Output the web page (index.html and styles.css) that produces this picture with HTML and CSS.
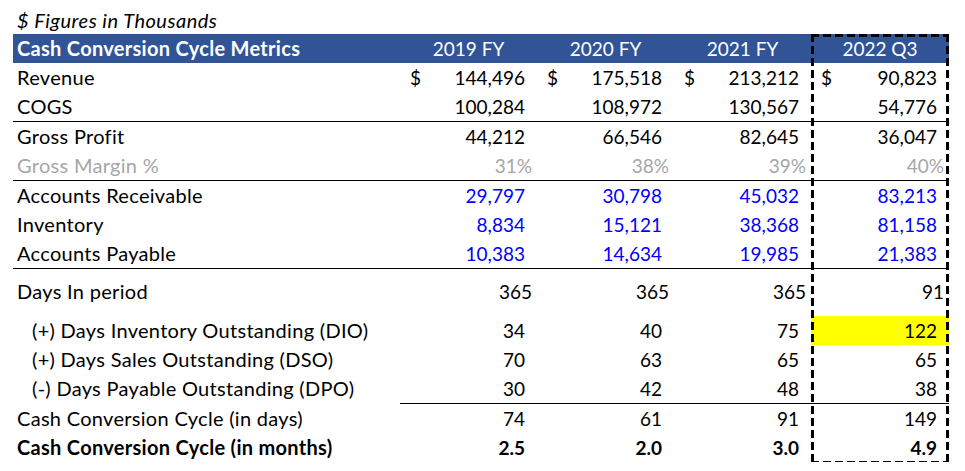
FILE: index.html
```html
<!DOCTYPE html>
<html>
<head>
<meta charset="utf-8">
<link rel="stylesheet" href="styles.css">
</head>
<body>
<div class="sheet">
  <div class="caption">$ Figures in Thousands</div>
  <div class="table-wrap">
    <table class="ccc">
      <colgroup>
        <col class="c-label"><col class="c-num"><col class="c-num"><col class="c-num"><col class="c-last">
      </colgroup>
      <thead>
        <tr class="hdr">
          <th class="lbl">Cash Conversion Cycle Metrics</th>
          <th>2019 FY</th><th>2020 FY</th><th>2021 FY</th><th>2022 Q3</th>
        </tr>
      </thead>
      <tbody>
        <tr>
          <td class="lbl">Revenue</td>
          <td><div class="acc"><span>$</span><span>144,496</span></div></td>
          <td><div class="acc"><span>$</span><span>175,518</span></div></td>
          <td><div class="acc"><span>$</span><span>213,212</span></div></td>
          <td><div class="acc"><span>$</span><span>90,823</span></div></td>
        </tr>
        <tr>
          <td class="lbl">COGS</td>
          <td class="n">100,284</td><td class="n">108,972</td><td class="n">130,567</td><td class="n">54,776</td>
        </tr>
        <tr class="rule">
          <td class="lbl">Gross Profit</td>
          <td class="n">44,212</td><td class="n">66,546</td><td class="n">82,645</td><td class="n">36,047</td>
        </tr>
        <tr class="muted">
          <td class="lbl">Gross Margin %</td>
          <td class="p">31%</td><td class="p">38%</td><td class="p">39%</td><td class="p">40%</td>
        </tr>
        <tr class="rule input">
          <td class="lbl">Accounts Receivable</td>
          <td class="n">29,797</td><td class="n">30,798</td><td class="n">45,032</td><td class="n">83,213</td>
        </tr>
        <tr class="input">
          <td class="lbl">Inventory</td>
          <td class="n">8,834</td><td class="n">15,121</td><td class="n">38,368</td><td class="n">81,158</td>
        </tr>
        <tr class="input">
          <td class="lbl">Accounts Payable</td>
          <td class="n">10,383</td><td class="n">14,634</td><td class="n">19,985</td><td class="n">21,383</td>
        </tr>
        <tr class="rule tall">
          <td class="lbl">Days In period</td>
          <td class="p">365</td><td class="p">365</td><td class="p">365</td><td class="p">91</td>
        </tr>
        <tr>
          <td class="lbl sub">(+) Days Inventory Outstanding (DIO)</td>
          <td class="n">34</td><td class="n">40</td><td class="n">75</td><td class="n hl">122</td>
        </tr>
        <tr>
          <td class="lbl sub">(+) Days Sales Outstanding (DSO)</td>
          <td class="n">70</td><td class="n">63</td><td class="n">65</td><td class="n">65</td>
        </tr>
        <tr>
          <td class="lbl sub">(-) Days Payable Outstanding (DPO)</td>
          <td class="n">30</td><td class="n">42</td><td class="n">48</td><td class="n">38</td>
        </tr>
        <tr class="sum">
          <td class="lbl">Cash Conversion Cycle (in days)</td>
          <td class="n">74</td><td class="n">61</td><td class="n">91</td><td class="n">149</td>
        </tr>
        <tr class="bold">
          <td class="lbl">Cash Conversion Cycle (in months)</td>
          <td class="n">2.5</td><td class="n">2.0</td><td class="n">3.0</td><td class="n">4.9</td>
        </tr>
      </tbody>
    </table>
    <div class="q3-frame"></div>
  </div>
</div>
</body>
</html>
```

FILE: styles.css
```css
html, body {
  margin: 0;
  padding: 0;
  background: #fff;
}
body {
  font-family: Lato, "Liberation Sans", sans-serif;
  font-size: 19px;
  color: #000;
}
.sheet {
  padding: 6px 0 0 13px;
}
.caption {
  font-style: italic;
  font-size: 20px;
  letter-spacing: 0.5px;
  height: 28px;
  line-height: 28px;
  padding-left: 4px;
}
.table-wrap {
  position: relative;
  width: 936px;
}
.ccc {
  border-collapse: collapse;
  table-layout: fixed;
  width: 936px;
}
.c-label { width: 387px; }
.c-num { width: 137px; }
.c-last { width: 138px; }
.ccc th, .ccc td {
  height: 29px;
  padding: 0;
  white-space: nowrap;
  vertical-align: middle;
  line-height: 29px;
}
.hdr th {
  background: #305496;
  color: #fff;
  font-weight: normal;
  text-align: center;
}
.ccc .lbl {
  padding-left: 4px;
  text-align: left;
  font-size: 20px;
  letter-spacing: 0.3px;
}
.hdr th.lbl {
  font-weight: bold;
}
.ccc .lbl.sub {
  padding-left: 19px;
}
.acc {
  display: flex;
  justify-content: space-between;
  padding: 0 12px 0 10px;
}
.ccc .n {
  text-align: right;
  padding-right: 12px;
}
.ccc .p {
  text-align: right;
  padding-right: 5px;
}
.rule td {
  border-top: 1px solid #000;
}
.muted td {
  color: #a6a6a6;
}
.input td:not(.lbl) {
  color: #0000ff;
}
.ccc .tall td {
  height: 39px;
  padding-top: 8px;
  vertical-align: top;
}
.hl {
  background: #ffff00;
}
.sum td:not(.lbl) {
  border-top: 1px solid #000;
}
.bold td {
  font-weight: bold;
}
.q3-frame {
  position: absolute;
  top: 0;
  right: 0;
  bottom: -2px;
  width: 138px;
  pointer-events: none;
  background:
    linear-gradient(to right, #000 8px, transparent 8px) left top / 12px 3px repeat-x,
    linear-gradient(to right, #000 8px, transparent 8px) left bottom / 12px 3px repeat-x,
    linear-gradient(to bottom, #000 8px, transparent 8px) left top / 3px 12px repeat-y,
    linear-gradient(to bottom, #000 8px, transparent 8px) right top / 3px 12px repeat-y;
}
```
